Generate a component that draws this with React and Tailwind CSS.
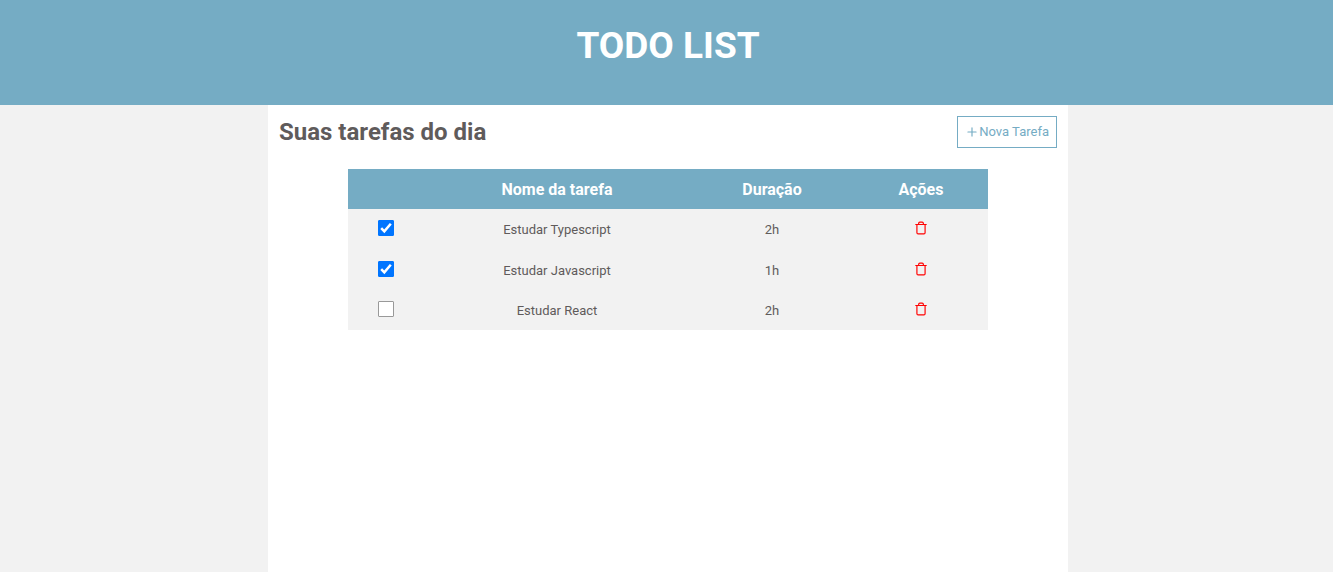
import { useState } from "react";
import { FiPlus, FiTrash } from "react-icons/fi";

const initialTasks = [
  { id: 1, name: "Estudar Typescript", duration: "2h", done: true },
  { id: 2, name: "Estudar Javascript", duration: "1h", done: true },
  { id: 3, name: "Estudar React", duration: "2h", done: false },
];

function Header() {
  return (
    <header className="bg-[#75acc4] pt-[23px] pb-9 pl-[3px] text-center">
      <h1 className="text-[37px] leading-[46px] font-bold text-white">TODO LIST</h1>
    </header>
  );
}

function Checkbox({ label, checked, onChange }) {
  return (
    <span className="mx-auto grid size-4">
      <input
        type="checkbox"
        aria-label={label}
        checked={checked}
        onChange={onChange}
        className="peer col-start-1 row-start-1 size-4 appearance-none rounded-[1px] border border-[#999999] bg-white checked:border-[#0075ff] checked:bg-[#0075ff]"
      />
      <svg
        viewBox="0 0 16 16"
        fill="none"
        stroke="white"
        strokeWidth="2.5"
        className="pointer-events-none invisible col-start-1 row-start-1 size-4 peer-checked:visible"
        aria-hidden="true"
      >
        <path d="M3.2 8.2 L6.3 11.4 L12.8 3.7" />
      </svg>
    </span>
  );
}

function TaskRow({ task, onToggle, onRemove }) {
  return (
    <tr className="h-10 even:h-[41px]">
      <td className="p-0 pb-0.5">
        <Checkbox
          label={task.name}
          checked={task.done}
          onChange={() => onToggle(task.id)}
        />
      </td>
      <td className="p-0 pt-0.5 text-center">{task.name}</td>
      <td className="p-0 pt-0.5 text-center">{task.duration}</td>
      <td className="p-0 pb-0.5">
        <button
          type="button"
          aria-label={"Excluir " + task.name}
          onClick={() => onRemove(task.id)}
          className="mx-auto block cursor-pointer text-[#ff0000]"
        >
          <FiTrash size={14} />
        </button>
      </td>
    </tr>
  );
}

export default function App() {
  const [tasks, setTasks] = useState(initialTasks);
  const toggle = (id) =>
    setTasks(tasks.map((t) => (t.id === id ? { ...t, done: !t.done } : t)));
  const remove = (id) => setTasks(tasks.filter((t) => t.id !== id));

  return (
    <div className="flex min-h-screen flex-col bg-[#f2f2f2] font-['Roboto',sans-serif] text-[#5f5b5b]">
      <Header />
      <div className="flex grow justify-center pl-[3px]">
        <main className="w-full max-w-[800px] bg-white px-[11px] pt-[11px]">
          <div className="flex items-start justify-between">
            <h2 className="text-2xl font-bold">Suas tarefas do dia</h2>
            <button
              type="button"
              className="flex h-8 cursor-pointer items-center border border-[#75acc4] px-[7px] text-[13px] text-[#75acc4]"
            >
              <FiPlus size={14} />
              Nova Tarefa
            </button>
          </div>
          <table className="mx-auto mt-[21px] w-full max-w-[640px] table-fixed border-collapse bg-[#f2f2f2] text-[13px]">
            <colgroup>
              <col className="w-[76px]" />
              <col className="w-[266px]" />
              <col className="w-[164px]" />
              <col className="w-[134px]" />
            </colgroup>
            <thead>
              <tr className="h-10 bg-[#75acc4] text-base text-white">
                <td className="p-0" />
                <th className="p-0 pt-0.5 font-bold">Nome da tarefa</th>
                <th className="p-0 pt-0.5 font-bold">Duração</th>
                <th className="p-0 pt-0.5 font-bold">Ações</th>
              </tr>
            </thead>
            <tbody>
              {tasks.map((task) => (
                <TaskRow key={task.id} task={task} onToggle={toggle} onRemove={remove} />
              ))}
            </tbody>
          </table>
        </main>
      </div>
    </div>
  );
}
